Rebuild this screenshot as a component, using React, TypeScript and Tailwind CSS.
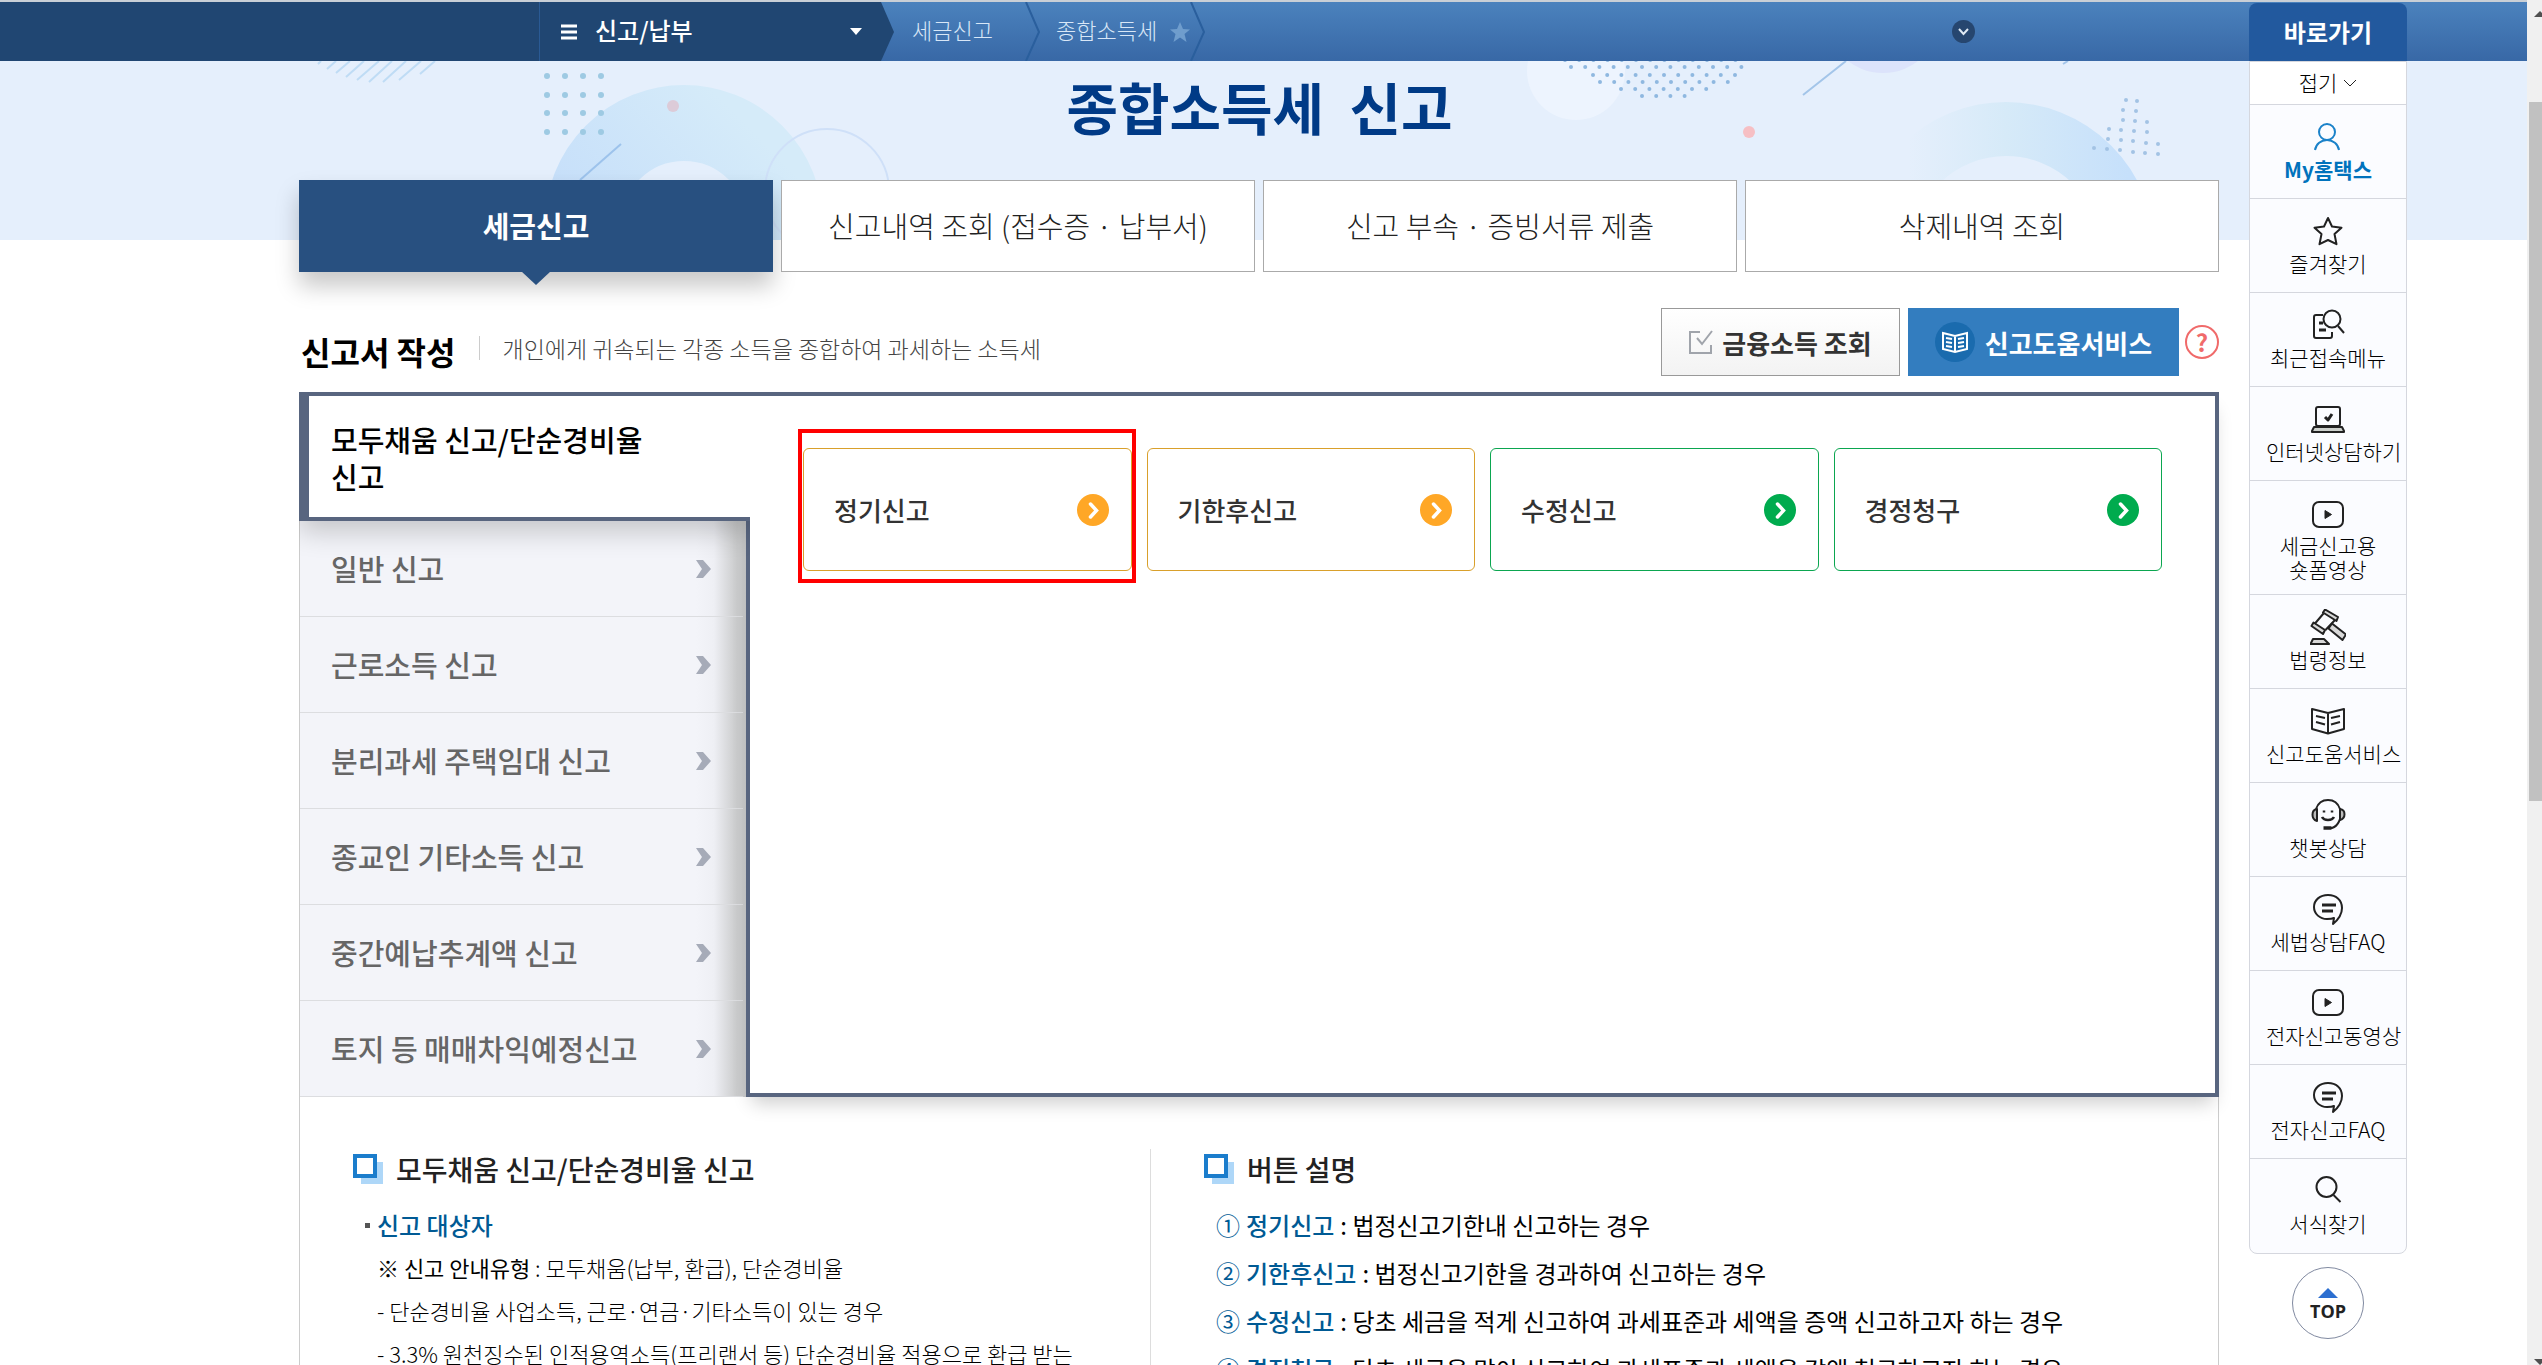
import type { ReactNode } from "react"

const tabs = ["세금신고", "신고내역 조회 (접수증 · 납부서)", "신고 부속 · 증빙서류 제출", "삭제내역 조회"]

const menuItems = [
  "일반 신고",
  "근로소득 신고",
  "분리과세 주택임대 신고",
  "종교인 기타소득 신고",
  "중간예납추계액 신고",
  "토지 등 매매차익예정신고",
]

const cards = [
  { name: "정기신고", border: "border-[#d9a02b]", fill: "#ffa726", highlight: true },
  { name: "기한후신고", border: "border-[#d9a02b]", fill: "#ffa726" },
  { name: "수정신고", border: "border-[#0ba650]", fill: "#00ab4e" },
  { name: "경정청구", border: "border-[#0ba650]", fill: "#00ab4e" },
]

const buttonGuide = [
  { no: "①", name: "정기신고", text: "법정신고기한내 신고하는 경우" },
  { no: "②", name: "기한후신고", text: "법정신고기한을 경과하여 신고하는 경우" },
  { no: "③", name: "수정신고", text: "당초 세금을 적게 신고하여 과세표준과 세액을 증액 신고하고자 하는 경우" },
  { no: "④", name: "경정청구", text: "당초 세금을 많이 신고하여 과세표준과 세액을 감액 청구하고자 하는 경우" },
]

const icons: Record<string, ReactNode> = {
  user: (
    <g stroke="#1b82c9">
      <circle cx="17" cy="13" r="8" />
      <path d="M5 31c1-6 6-10 12-10s11 4 12 10" />
    </g>
  ),
  star: <path d="M18 5l4 8.500 9.500 1.200-7 6.300 2 10.200L18 27l-8.500 4.200 2-10.200-7-6.300L14 13.500z" />,
  recent: (
    <>
      <path d="M13 8H6a2 2 0 0 0-2 2v19a2 2 0 0 0 2 2h14a2 2 0 0 0 2-2v-4" />
      <path d="M9 16h4M9 23h7" strokeWidth="3" />
      <circle cx="22" cy="12" r="8.500" />
      <path d="M28 19l6 7" />
    </>
  ),
  laptop: (
    <>
      <rect x="6" y="6" width="24" height="19" rx="2" />
      <path d="M4 26h28l2 4v1H2v-1z" fill="#ccd0cc" />
      <path d="M15 16l3 3 4-6" strokeWidth="3" />
    </>
  ),
  video: (
    <>
      <rect x="3" y="5" width="30" height="25" rx="6" />
      <path d="M15 13.500v8l6.500-4z" fill="#222" strokeWidth="1" />
    </>
  ),
  gavel: (
    <>
      <path d="M13 3.500l2-3 13 7.500-1.500 4zM1.500 17l2-3.500L15 21l-2 4z" fill="#d8d8d8" />
      <path d="M13.500 4.500L5 14.500M25 11l-9.500 10" />
      <path d="M22 14.500l14 11-3.500 5.500-14-11.500z" fill="#d8d8d8" />
      <path d="M3 30h11l5 5H0.500z" fill="#d8d8d8" />
    </>
  ),
  book: (
    <>
      <path d="M2 6l16 4 16-4v20l-16 4.500L2 26zM18 10v20" />
      <path d="M6 13l9 2M6 19l9 2.500M30 13l-9 2M30 19l-9 2.500" />
    </>
  ),
  chatbot: (
    <>
      <path d="M6 12C8 6 12 3 18 3s10 3 12 9c2 10-2 17-8 19h-8" />
      <path d="M7 12c-6 1-6 10 0 12zM30 12c6 1 6 9 0 11z" fill="#bbb" />
      <path d="M12 20c2 4 10 4 12 0M14 13.500v2M22 13.500v2" strokeWidth="2.500" />
      <path d="M13.500 31h8" strokeWidth="3.500" />
    </>
  ),
  bubble: (
    <>
      <path d="M24 27l-1 6c6-5 9-10 9-16C32 9 26 4 18 4S4 9 4 16s6 12 13 12c2 0 5 0 7-1z" />
      <path d="M12 14h14M12 20h11" strokeWidth="3" />
    </>
  ),
  search: (
    <>
      <circle cx="16.500" cy="14" r="10" />
      <path d="M23.500 22l7 7" />
    </>
  ),
}

const quickLinks = [
  { icon: "user", label: "My홈택스", active: true },
  { icon: "star", label: "즐겨찾기" },
  { icon: "recent", label: "최근접속메뉴" },
  { icon: "laptop", label: "인터넷상담하기" },
  { icon: "video", label: "세금신고용", second: "숏폼영상" },
  { icon: "gavel", label: "법령정보" },
  { icon: "book", label: "신고도움서비스" },
  { icon: "chatbot", label: "챗봇상담" },
  { icon: "bubble", label: "세법상담FAQ" },
  { icon: "video", label: "전자신고동영상" },
  { icon: "bubble", label: "전자신고FAQ" },
  { icon: "search", label: "서식찾기" },
]

// [first x, y, count] of each row in the halftone patch
const halftone = [
  [1565, -1, 13],
  [1571, 6, 13],
  [1593, 14, 11],
  [1600, 21, 10],
  [1621, 28, 7],
  [1642, 35, 4],
]

const triangleDots = [
  [2126, 39], [2137, 40], [2123, 49], [2136, 50], [2123, 59], [2135, 60], [2147, 61],
  [2109, 68], [2121, 69], [2134, 70], [2147, 71], [2108, 78], [2121, 79], [2133, 80],
  [2146, 82], [2158, 83], [2094, 87], [2107, 88], [2120, 89], [2133, 91], [2145, 92], [2158, 93],
]

const HeroArt = () => (
  <svg className="absolute left-0 top-0" width="2527" height="179" fill="none" aria-hidden="true">
    <defs>
      <linearGradient id="ringLeft" x1="0" y1="1" x2="1" y2="0">
        <stop offset="0.2" stopColor="#c5defa" />
        <stop offset="0.9" stopColor="#d5ebf9" />
      </linearGradient>
      <linearGradient id="ringRight" x1="0" x2="1">
        <stop offset="0.1" stopColor="#d6eaf8" stopOpacity="0" />
        <stop offset="0.5" stopColor="#d6eaf8" />
        <stop offset="1" stopColor="#c6e0fb" />
      </linearGradient>
    </defs>
    <path
      d="M318 3l3-3M327 8l9-8M336 12l14-12M346 16l18-16M357 19l22-19M369 21l23-21M383 21l23-21M399 19l22-19M420 13l15-13"
      stroke="#bfdcf5"
      strokeWidth="2"
    />
    <circle cx="684" cy="163" r="101" stroke="url(#ringLeft)" strokeWidth="76" />
    {[15, 34, 52, 71].map((y) =>
      [547, 565, 583, 601].map((x) => <circle key={`${x}-${y}`} cx={x} cy={y} r="3" fill="#9ecae3" />)
    )}
    <circle cx="673" cy="45" r="6" fill="#dccbd8" />
    <path d="M580 119l41-36" stroke="#9dc3ec" strokeWidth="2" />
    <circle cx="827" cy="130" r="62" stroke="#cfe0f8" strokeWidth="2" />
    <circle cx="1576" cy="10" r="49" fill="#edf4fe" />
    {halftone.map(([start, y, count]) =>
      Array.from({ length: count }, (_, i) => (
        <circle key={`${y}-${i}`} cx={start + i * 14.2} cy={y} r="2" fill="#8fb8e0" />
      ))
    )}
    <path d="M1803 34l43-34M2063 3l5-3" stroke="#a3c5e9" strokeWidth="2" />
    <circle cx="1883" cy="-45" r="57" fill="#dce3fb" />
    <circle cx="1749" cy="71" r="6" fill="#f6bfc4" />
    <circle cx="2006" cy="190" r="122" stroke="url(#ringRight)" strokeWidth="54" />
    {triangleDots.map(([x, y]) => (
      <circle key={`${x}-${y}`} cx={x} cy={y} r="2" fill="#a3c3e4" />
    ))}
  </svg>
)

const TopBar = () => (
  <header className="relative flex h-[61px] border-t-2 border-[#c9cfd6] bg-gradient-to-b from-[#4b82bd] to-[#3868a6] text-white">
    <div className="w-[540px] border-r border-[#2a5a94] bg-[#204672]" />
    <button className="flex w-[341px] items-center bg-[#204672] pl-[21px] pr-[19px] text-2xl font-medium">
      <svg width="16" height="16" stroke="#fff" strokeWidth="3" aria-hidden="true">
        <path d="M0 2h16M0 8h16M0 14h16" />
      </svg>
      <span className="-mt-1 ml-[18px] flex-1 text-left">신고/납부</span>
      <svg width="12" height="7" fill="#fff" aria-hidden="true">
        <path d="M0 0h12L6 7z" />
      </svg>
    </button>
    <svg width="13" height="59" aria-hidden="true">
      <path d="M0 0l13 30L0 59z" fill="#204672" />
    </svg>
    <nav className="flex items-center text-[22px] font-light text-[#d8e7f7]">
      <a href="#tax" className="-mt-1 pl-[18px]">세금신고</a>
      <svg className="ml-[32px]" width="15" height="59" fill="none" stroke="#2a5f9d" strokeWidth="2" aria-hidden="true">
        <path d="M1 0l13 30L1 59" />
      </svg>
      <a href="#income" className="-mt-1 pl-[16px]">종합소득세</a>
      <svg className="ml-[13px]" width="20" height="20" viewBox="0 0 20 20" fill="#6f9dcd" aria-hidden="true">
        <path d="M10 0l3 7 7 .5-5.500 4.500 2 8L10 15.500 3.500 20l2-8L0 7.500 7 7z" />
      </svg>
      <svg width="15" height="59" fill="none" stroke="#2a5f9d" strokeWidth="2" aria-hidden="true">
        <path d="M1 0l13 30L1 59" />
      </svg>
    </nav>
    <button className="ml-auto mr-[552px]" aria-label="메뉴 펼치기">
      <svg width="23" height="23" fill="none" aria-hidden="true">
        <circle cx="11.500" cy="11.500" r="11.500" fill="#26466f" />
        <path d="M7 9l4.500 5L16 9" stroke="#dfe9f3" strokeWidth="2" />
      </svg>
    </button>
  </header>
)

const SectionTitle = ({ children }: { children: ReactNode }) => (
  <h3 className="flex h-[40px] items-center gap-[13px] text-[28px] font-medium leading-[36px] text-[#222]">
    <svg width="30" height="30" aria-hidden="true">
      <path d="M8 8h22v22H8z" fill="#aed7f8" />
      <path d="M2 2h20v20H2z" fill="#fff" stroke="#1b7dcc" strokeWidth="4" />
    </svg>
    {children}
  </h3>
)

const ReportPanel = () => (
  <div className="flex">
    <nav className="flex w-[447px] flex-col border-l border-[#ccc] bg-[linear-gradient(to_left,#c8c9ca_0,#cbcccd_10px,#eeeff4_32px,#f3f4f9_50px)]">
      <a
        href="#simple"
        className="relative z-10 -ml-px -mr-1 flex h-[129px] flex-col justify-center border-y-4 border-l-[10px] border-[#58657f] bg-white pl-[22px] pt-[3px] text-[29px] font-medium leading-[37px] text-black shadow-[0_10px_26px_rgba(0,0,0,0.2)] [clip-path:inset(0_0_-60px_0)]"
      >
        <span>모두채움 신고/단순경비율</span>
        <span>신고</span>
      </a>
      {menuItems.map((item) => (
        <a
          key={item}
          href="#menu"
          className="mr-[3px] flex h-[96px] items-center justify-between border-b border-[#dcdde0] pl-[31px] pr-[31px] text-[29px] font-medium text-[#666]"
        >
          {item}
          <svg width="16" height="18" fill="#a6abb8" aria-hidden="true">
            <path d="M0 0h7l8 9-8 9H0l6-9z" />
          </svg>
        </a>
      ))}
    </nav>
    <section className="min-w-0 flex-1 border-4 border-[#58657f] bg-white px-[53px] pt-[52px] shadow-[0_12px_18px_-6px_rgba(0,0,0,0.2)]">
      <div className="grid grid-cols-4 gap-[15px]">
        {cards.map((card) => (
          <button
            key={card.name}
            className={`relative flex h-[123px] items-center justify-between rounded-md border bg-white pl-[30px] pr-[22px] text-[26px] font-medium text-[#333] ${card.border}`}
          >
            {card.name}
            <svg width="32" height="32" fill="none" aria-hidden="true">
              <circle cx="16" cy="16" r="16" fill={card.fill} />
              <path d="M13.500 10l6 6.500-6 6.500" stroke="#fff" strokeWidth="3.500" strokeLinecap="round" />
            </svg>
            {card.highlight && <span className="absolute -bottom-[13px] -left-[6px] -right-[5px] -top-[20px] border-4 border-[#f00]" />}
          </button>
        ))}
      </div>
    </section>
  </div>
)

const Guide = () => (
  <div className="flex border-x border-[#ccc] pt-[52px]">
    <section className="w-[850px] pl-[53px]">
      <SectionTitle>모두채움 신고/단순경비율 신고</SectionTitle>
      <h4 className="mt-4 flex h-[40px] items-center gap-[7px] pl-[12px] text-2xl font-medium text-[#005a94]">
        <span className="h-[5px] w-[5px] bg-[#555]" />
        신고 대상자
      </h4>
      <ul className="pl-[24px] pt-px text-[22px] font-light leading-[43px] text-black">
        <li>
          ※ <b>신고 안내유형</b> : 모두채움(납부, 환급), 단순경비율
        </li>
        <li>- 단순경비율 사업소득, 근로·연금·기타소득이 있는 경우</li>
        <li>- 3.3% 원천징수된 인적용역소득(프리랜서 등) 단순경비율 적용으로 환급 받는</li>
      </ul>
    </section>
    <section className="min-w-0 flex-1 border-l border-[#ddd] pl-[53px]">
      <SectionTitle>버튼 설명</SectionTitle>
      <ul className="pl-[12px] pt-[12px] text-2xl leading-[48px] text-black">
        {buttonGuide.map((item) => (
          <li key={item.no} className="flex gap-[6px]">
            <span className="text-[#005a94]">{item.no}</span>
            <b className="font-medium text-[#005a94]">{item.name}</b>
            <span>: {item.text}</span>
          </li>
        ))}
      </ul>
    </section>
  </div>
)

const QuickMenu = () => (
  <aside className="absolute right-[120px] top-[3px] z-20 w-[158px] text-[21px]">
    <h2 className="h-[58px] rounded-t-lg bg-[#22599e] text-center text-2xl font-bold leading-[58px] text-white">바로가기</h2>
    <div className="overflow-hidden rounded-b-lg border border-[#d5d7de] bg-[#fbfcff]">
      <button className="flex h-[43px] w-full items-center justify-center gap-[6px] border-b border-[#d5d7de] bg-white font-light">
        접기
        <svg width="14" height="9" fill="none" stroke="#222" strokeWidth="1" aria-hidden="true">
          <path d="M1 1l6 6 6-6" />
        </svg>
      </button>
      {quickLinks.map((link) => (
        <a
          key={link.label}
          href="#quick"
          className={`flex flex-col items-center whitespace-nowrap border-b border-[#d5d7de] px-4 last:border-b-0 ${
            link.second ? "h-[114px] pt-4 leading-[24px]" : "h-[94px] pt-[14px] leading-[28px]"
          } ${link.active ? "font-bold text-[#0072bc]" : "font-light text-black"}`}
        >
          <svg className="shrink-0" width="36" height="36" fill="none" stroke="#222" strokeWidth="2" strokeLinejoin="round" aria-hidden="true">
            {icons[link.icon]}
          </svg>
          <span className="min-w-full self-start text-center">
            {link.label}
            {link.second && (
              <>
                <br />
                {link.second}
              </>
            )}
          </span>
        </a>
      ))}
    </div>
    <button className="mx-auto mt-[13px] flex h-[72px] w-[72px] flex-col items-center justify-center rounded-full border border-[#8089a0] bg-white font-['Open_Sans',sans-serif] text-lg font-bold leading-[26px] text-[#222]">
      <svg className="mt-[6px]" width="20" height="10" fill="#2c6fd0" aria-hidden="true">
        <path d="M10 0l10 10H0z" />
      </svg>
      TOP
    </button>
  </aside>
)

const ScrollBar = () => (
  <div className="flex w-[15px] shrink-0 flex-col bg-[#f0f0f0] pl-[2px]" aria-hidden="true">
    <svg className="shrink-0" width="13" height="17" fill="#505050">
      <path d="M5 17l6-6 6 6z" />
    </svg>
    <div className="mt-[85px] h-[699px] bg-[#c1c1c1]" />
    <svg className="mt-auto shrink-0" width="13" height="6" fill="#505050">
      <path d="M5 0h12l-6 6z" />
    </svg>
  </div>
)

export default function App() {
  return (
    <div className="flex h-screen overflow-hidden bg-white font-['Noto_Sans_CJK_KR',sans-serif] leading-normal">
      <div className="relative min-w-0 flex-1">
        <TopBar />
        <div className="relative h-[179px] overflow-hidden bg-[#e5effc]">
          <HeroArt />
          <h1 className="relative pr-[8px] pt-[3px] text-center text-[56px] font-bold leading-[84px] text-[#003a86]">종합소득세&nbsp; 신고</h1>
        </div>
        <main className="relative -mt-[60px] pl-[299px] pr-[308px]">
          <nav className="grid grid-cols-4 gap-2">
            {tabs.map((tab, index) => (
              <a
                key={tab}
                href="#tab"
                className={`relative flex h-[92px] items-center justify-center border text-[29px] ${
                  index === 0
                    ? "border-[#285080] bg-[#285080] font-bold text-white shadow-[0_14px_22px_rgba(0,0,0,0.22)]"
                    : "border-[#aaa] bg-white font-light text-[#222]"
                }`}
              >
                {tab}
                {index === 0 && (
                  <svg className="absolute left-1/2 top-full -ml-[15px]" width="30" height="14" fill="#285080" aria-hidden="true">
                    <path d="M0 0h30L15 14z" />
                  </svg>
                )}
              </a>
            ))}
          </nav>
          <div className="mb-4 mt-[36px] flex h-[68px] items-center">
            <h2 className="pl-[2px] pt-[18px] text-[32px] font-bold text-black">신고서 작성</h2>
            <p className="ml-[24px] mt-[12px] border-l border-[#ccc] pl-[22px] text-[23px] font-light leading-[24px] text-[#444]">
              개인에게 귀속되는 각종 소득을 종합하여 과세하는 소득세
            </p>
            <button className="ml-auto flex h-[68px] w-[239px] items-center justify-center gap-[9px] border border-[#999] bg-gradient-to-b from-white to-[#f3f3f3] text-[26px] font-bold text-[#333]">
              <svg width="24" height="24" fill="none" stroke="#a0a4ab" strokeWidth="2" aria-hidden="true">
                <path d="M11 2H1v21h21v-8" />
                <path d="M8 8l5 6L23 1" />
              </svg>
              금융소득 조회
            </button>
            <button className="ml-2 flex h-[68px] w-[271px] items-center justify-center gap-[10px] bg-[#337dbf] text-[26px] font-bold text-white">
              <svg width="40" height="40" fill="none" stroke="#fff" strokeWidth="2" aria-hidden="true">
                <circle cx="20" cy="20" r="20" fill="#1a6bae" stroke="none" />
                <path d="M8 11l12 3 12-3v16l-12 3-12-3zM20 14v16M11 16l6 1M11 20l6 1M11 24l6 1M29 16l-6 1M29 20l-6 1M29 24l-6 1" />
              </svg>
              신고도움서비스
            </button>
            <button className="ml-[6px] h-[34px] w-[34px] rounded-full border-2 border-[#f06a6a] text-2xl font-bold leading-[28px] text-[#f06a6a]">?</button>
          </div>
          <ReportPanel />
          <Guide />
        </main>
        <QuickMenu />
      </div>
      <ScrollBar />
    </div>
  )
}
